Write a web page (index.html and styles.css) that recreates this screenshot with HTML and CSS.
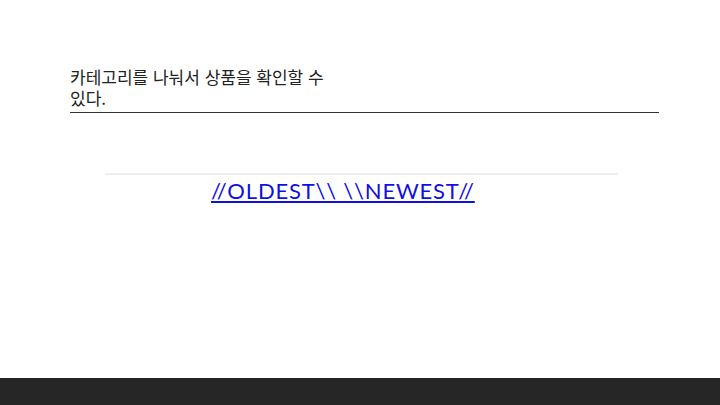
FILE: index.html
```html
<!DOCTYPE html>
<html lang="ko">
<head>
<meta charset="utf-8">
<link rel="stylesheet" href="styles.css">
</head>
<body>
<main class="page">
  <section class="intro">
    <p class="intro-text">카테고리를 나눠서 상품을 확인할 수 있다.</p>
  </section>
  <section class="sort">
    <div class="sort-rule"></div>
    <a class="sort-link" href="#">//OLDEST\\ \\NEWEST//</a>
  </section>
</main>
<footer class="footer"></footer>
</body>
</html>
```
FILE: styles.css
```css
html, body {
  margin: 0;
  padding: 0;
  background: #fff;
}
body {
  width: 720px;
  height: 405px;
  display: flex;
  flex-direction: column;
  font-family: "Noto Sans CJK KR", "Noto Sans", sans-serif;
}
.page {
  flex: 1;
  display: flex;
  flex-direction: column;
}
.intro {
  margin: 66px 61px 0 70px;
  border-bottom: 1px solid #333;
}
.intro-text {
  margin: 0 0 4px;
  width: 262px;
  font-size: 17px;
  line-height: 21px;
  color: #222;
  word-break: keep-all;
}
.sort {
  margin: 60px 102px 0 105px;
  display: flex;
  flex-direction: column;
}
.sort-rule {
  height: 2px;
  background: #eee;
}
.sort-link {
  align-self: flex-start;
  margin: 3px 0 0 106px;
  font-family: "Lato", sans-serif;
  font-size: 22px;
  letter-spacing: 0.8px;
  line-height: 26px;
  color: #1010e0;
  text-decoration: underline;
}
.footer {
  height: 27px;
  background: #262626;
}
```
